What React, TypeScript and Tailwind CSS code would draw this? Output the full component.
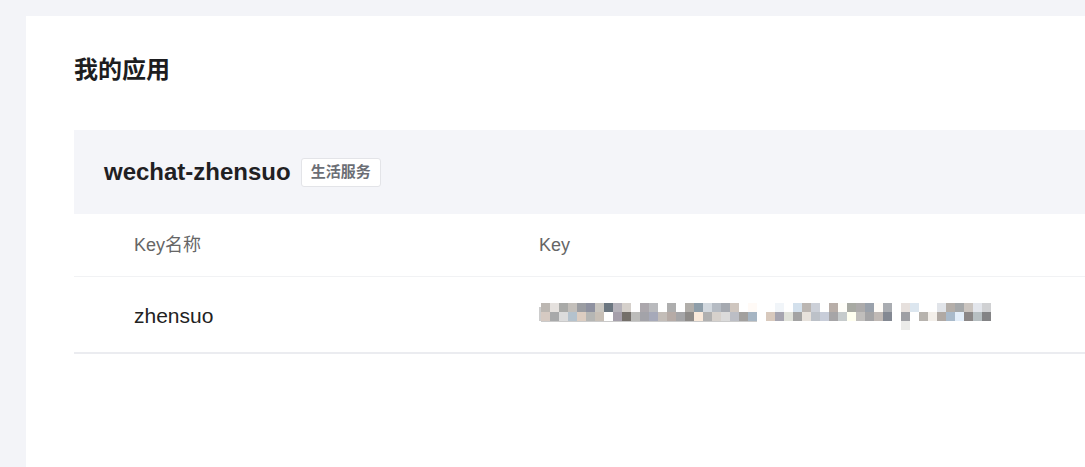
const top = [
  "#bcb7b2", "#e5e1de", "#a9aaa8", "#c3bfba", "#9b9da2", "#8e91a0", "#c9c6c0", "#6b7680", "#b5b2ba", "#d5d0cb",
  "#ffffff", "#aba7ac", "#b9babd", "#ffffff", "#aeaeae", "#ffffff", "#b1aeaa", "#8e9ea9", "#d2d8de", "#b5bbc3",
  "#a5a9b0", "#cfc6bf", "#ffffff", "#fffaf6", "#ffffff", "#ffffff", "#f1f5f9", "#ffffff", "#d3e0ec", "#bbb6b2",
  "#ccd0d8", "#ffffff", "#b8aea8", "#fffef9", "#a8aaa3", "#adabab", "#9aa1ab", "#fffcf8", "#a9acb1", "#ffffff",
  "#e6e0dd", "#dce6ef", "#ffffff", "#ffffff", "#e1e4e9", "#b4aea9", "#a5a8aa", "#cbc5c0", "#e3e6ec", "#d0d1d3",
];

const bottom = [
  "#d6cac2", "#a8a9aa", "#dcdcdc", "#b4c2cd", "#dccdc1", "#b5b6b4", "#c7bfb6", "#ffffff", "#a59fab", "#746f6a",
  "#bcbcba", "#a3a3a9", "#a6a9b9", "#c3bdb8", "#b6aba6", "#a5a5a7", "#8e8b88", "#f9e9da", "#b0b0b0", "#d6d1cc",
  "#dbdbdb", "#bcbec5", "#a2a09e", "#a6b5c3", "#ffffff", "#d8c9bd", "#a6a5b0", "#e0e2da", "#a3a3a3", "#e7e2dc",
  "#bcc1c8", "#c8cdd9", "#a6a5a7", "#c6cbcc", "#fffff0", "#c0bebc", "#a4a4a6", "#c0b9b5", "#838892", "#ffffff",
  "#9e9fa4", "#ffffff", "#b7b3ae", "#f3efea", "#b0a9a4", "#a9bacb", "#e3eefa", "#8b8787", "#b7bfc2", "#838385",
];

// blurred key, drawn as a mosaic
function MaskedKey() {
  return (
    <svg width="454" height="27" viewBox="0 0 454 27" className="block">
      <rect x="0" y="4" width="2" height="14" fill="#9c9c9c" opacity="0.5" />
      {top.map((c, i) => (
        <rect key={"t" + i} x={2 + i * 9} y="0" width="9" height="9" fill={c} />
      ))}
      {bottom.map((c, i) => (
        <rect key={"b" + i} x={2 + i * 9} y="9" width="9" height="9" fill={c} />
      ))}
      <rect x="2" y="18" width="216" height="1" fill="#8a8a8a" opacity="0.45" />
      <rect x={2 + 40 * 9} y="18" width="9" height="9" fill="#ebebe9" />
    </svg>
  );
}

export default function App() {
  return (
    <div
      className="min-h-screen bg-[#f3f4f8] pl-[26px] pt-4"
      style={{ fontFamily: '"Liberation Sans", "Noto Sans CJK SC", sans-serif' }}
    >
      <div className="bg-white min-h-[451px] pl-12 pt-[36px]">
        <h1
          className="text-[24px] leading-8 font-bold text-[#1d1d1f]"
          style={{ fontFamily: '"Noto Sans CJK SC", sans-serif' }}
        >
          我的应用
        </h1>

        <div className="mt-[46px]">
          {/* app header */}
          <div className="h-[84px] bg-[#f4f5f9] flex items-center pl-[30px] gap-[10px]">
            <span className="text-[24px] font-bold text-[#1f2023]">wechat-zhensuo</span>
            <span className="h-[29px] px-[9px] flex items-center bg-white border border-[#e3e4e8] rounded-[3px] text-[15px] font-semibold text-[#6b6e75]">
              生活服务
            </span>
          </div>

          {/* keys table */}
          <div className="grid grid-cols-[405px_1fr] h-[63px] items-center border-b border-[#f1f2f4] text-[18px] text-[#666666]">
            <div className="pl-[60px]">Key名称</div>
            <div className="pl-[60px]">Key</div>
          </div>
          <div className="grid grid-cols-[405px_1fr] h-[77px] items-center border-b-2 border-[#ebecf0] text-[#222222]">
            <div className="pl-[60px] pt-[3px] text-[21px]">zhensuo</div>
            <div className="pl-[60px] pt-[3px]">
              <MaskedKey />
            </div>
          </div>
        </div>
      </div>
    </div>
  );
}
